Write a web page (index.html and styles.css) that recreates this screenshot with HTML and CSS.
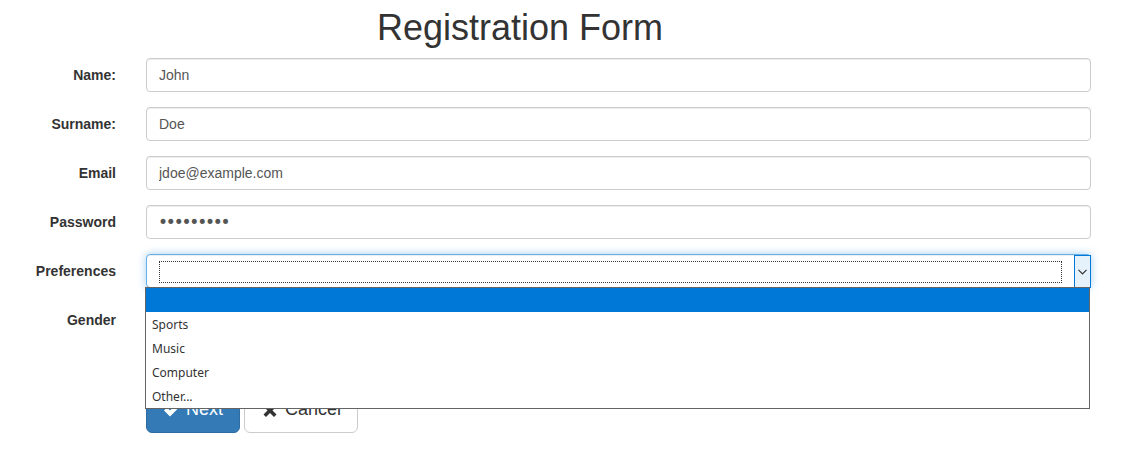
FILE: index.html
```html
<!DOCTYPE html>
<html lang="en">
<head>
<meta charset="utf-8">
<title>Registration Form</title>
<link rel="stylesheet" href="styles.css">
</head>
<body>
<h1 class="title">Registration Form</h1>
<form class="form">
  <div class="row">
    <label class="lbl">Name:</label>
    <div class="field"><input class="ctl" type="text" value="John"></div>
  </div>
  <div class="row">
    <label class="lbl">Surname:</label>
    <div class="field"><input class="ctl" type="text" value="Doe"></div>
  </div>
  <div class="row">
    <label class="lbl">Email</label>
    <div class="field"><input class="ctl" type="text" value="jdoe@example.com"></div>
  </div>
  <div class="row">
    <label class="lbl">Password</label>
    <div class="field"><input class="ctl pwd" type="password" value="secret123"></div>
  </div>
  <div class="row">
    <label class="lbl">Preferences</label>
    <div class="field">
      <div class="select">
        <span class="ring"></span>
        <span class="arrow"><svg width="9" height="6" viewBox="0 0 9 6"><polyline points="0.5,0.8 4.5,4.8 8.5,0.8" fill="none" stroke="#333" stroke-width="1.2"/></svg></span>
        <ul class="dropdown">
          <li class="opt sel"></li>
          <li class="opt">Sports</li>
          <li class="opt">Music</li>
          <li class="opt">Computer</li>
          <li class="opt">Other...</li>
        </ul>
      </div>
    </div>
  </div>
  <div class="row">
    <label class="lbl">Gender</label>
    <div class="field radios">
      <label class="radio"><input type="radio" name="g"> Male</label>
      <label class="radio"><input type="radio" name="g"> Female</label>
      <label class="radio"><input type="radio" name="g"> Other</label>
    </div>
  </div>
  <div class="row">
    <div class="lbl"></div>
    <div class="field actions">
      <button type="button" class="btn btn-primary"><svg class="ico" width="18" height="16" viewBox="0 0 18 16"><path d="M1 8.5 L4 5.5 L7 8.5 L14 1.5 L17 4.5 L7 14.5 Z" fill="#fff"/></svg> Next</button>
      <button type="button" class="btn btn-default"><svg class="ico ico-wide" width="18" height="16" viewBox="0 0 18 16"><path d="M2.5 4.5 L5 2 L9 6 L13 2 L15.5 4.5 L11.5 8.5 L15.5 12.5 L13 15 L9 11 L5 15 L2.5 12.5 L6.5 8.5 Z" fill="#333"/></svg> Cancel</button>
    </div>
  </div>
</form>
</body>
</html>
```

FILE: styles.css
```css
* { box-sizing: border-box; }
html, body { margin: 0; padding: 0; background: #fff; }
body {
  font-family: "Liberation Sans", Arial, Helvetica, sans-serif;
  font-size: 14px;
  line-height: 1.428571;
  color: #333;
}
.title {
  width: 1040px;
  margin: 8px 0 10px 0;
  text-align: center;
  font-size: 36px;
  font-weight: 500;
  line-height: 1.1;
  color: #333;
}
.form { margin: 0; }
.row {
  display: flex;
  margin-bottom: 15px;
}
.lbl {
  width: 131px;
  flex: none;
  padding: 7px 15px 0 0;
  text-align: right;
  font-weight: bold;
  line-height: 20px;
}
.field {
  width: 960px;
  flex: none;
  padding-left: 15px;
  position: relative;
}
.ctl {
  display: block;
  width: 945px;
  height: 34px;
  padding: 6px 12px;
  font-family: "Liberation Sans", Arial, sans-serif;
  font-size: 14px;
  line-height: 20px;
  color: #555;
  background: #fff;
  border: 1px solid #ccc;
  border-radius: 4px;
  box-shadow: inset 0 1px 1px rgba(0,0,0,.075);
  outline: none;
}
.pwd {
  font-family: "DejaVu Sans", sans-serif;
  font-size: 17px;
  letter-spacing: -2.2px;
  padding-left: 11px;
}
.select {
  position: relative;
  display: flex;
  align-items: flex-start;
  width: 945px;
  height: 34px;
  background: #fff;
  border: 1px solid #66afe9;
  border-radius: 4px;
  box-shadow: inset 0 1px 1px rgba(0,0,0,.075), 0 0 8px rgba(102,175,233,.6);
}
.ring {
  flex: 1;
  height: 22px;
  margin: 6px 0 0 12px;
  border: 1px dotted #333;
}
.arrow {
  flex: none;
  width: 17px;
  height: 33px;
  margin: 0 -1px 0 12px;
  background: #e5f1fb;
  border: 1px solid #0078d7;
  display: flex;
  align-items: center;
  justify-content: center;
}
.arrow svg { display: block; margin-top: 1px; }
.dropdown {
  position: absolute;
  z-index: 10;
  left: -2px;
  top: 32px;
  width: 945px;
  margin: 0;
  padding: 0;
  list-style: none;
  background: #fff;
  border: 1px solid #646464;
}
.opt {
  height: 24px;
  line-height: 24px;
  padding: 1px 0 0 6px;
  font-family: "Noto Sans", "Open Sans", sans-serif;
  font-size: 12px;
  color: #333;
}
.opt.sel { background: #0078d7; }
.radios { height: 69px; }
.radio {
  display: block;
  height: 23px;
  padding-top: 3px;
  line-height: 20px;
}
.actions {
  display: flex;
  gap: 4px;
}
.btn {
  display: inline-flex;
  align-items: center;
  height: 46px;
  padding: 10px 16px;
  font-family: "Liberation Sans", Arial, sans-serif;
  font-size: 18px;
  line-height: 1.3333;
  border: 1px solid transparent;
  border-radius: 6px;
  cursor: pointer;
}
.ico { display: block; margin-right: 5px; }
.ico-wide { margin-right: 6px; }
.btn-primary {
  color: #fff;
  background: #337ab7;
  border-color: #2e6da4;
}
.btn-default {
  color: #333;
  background: #fff;
  border-color: #ccc;
}
```
